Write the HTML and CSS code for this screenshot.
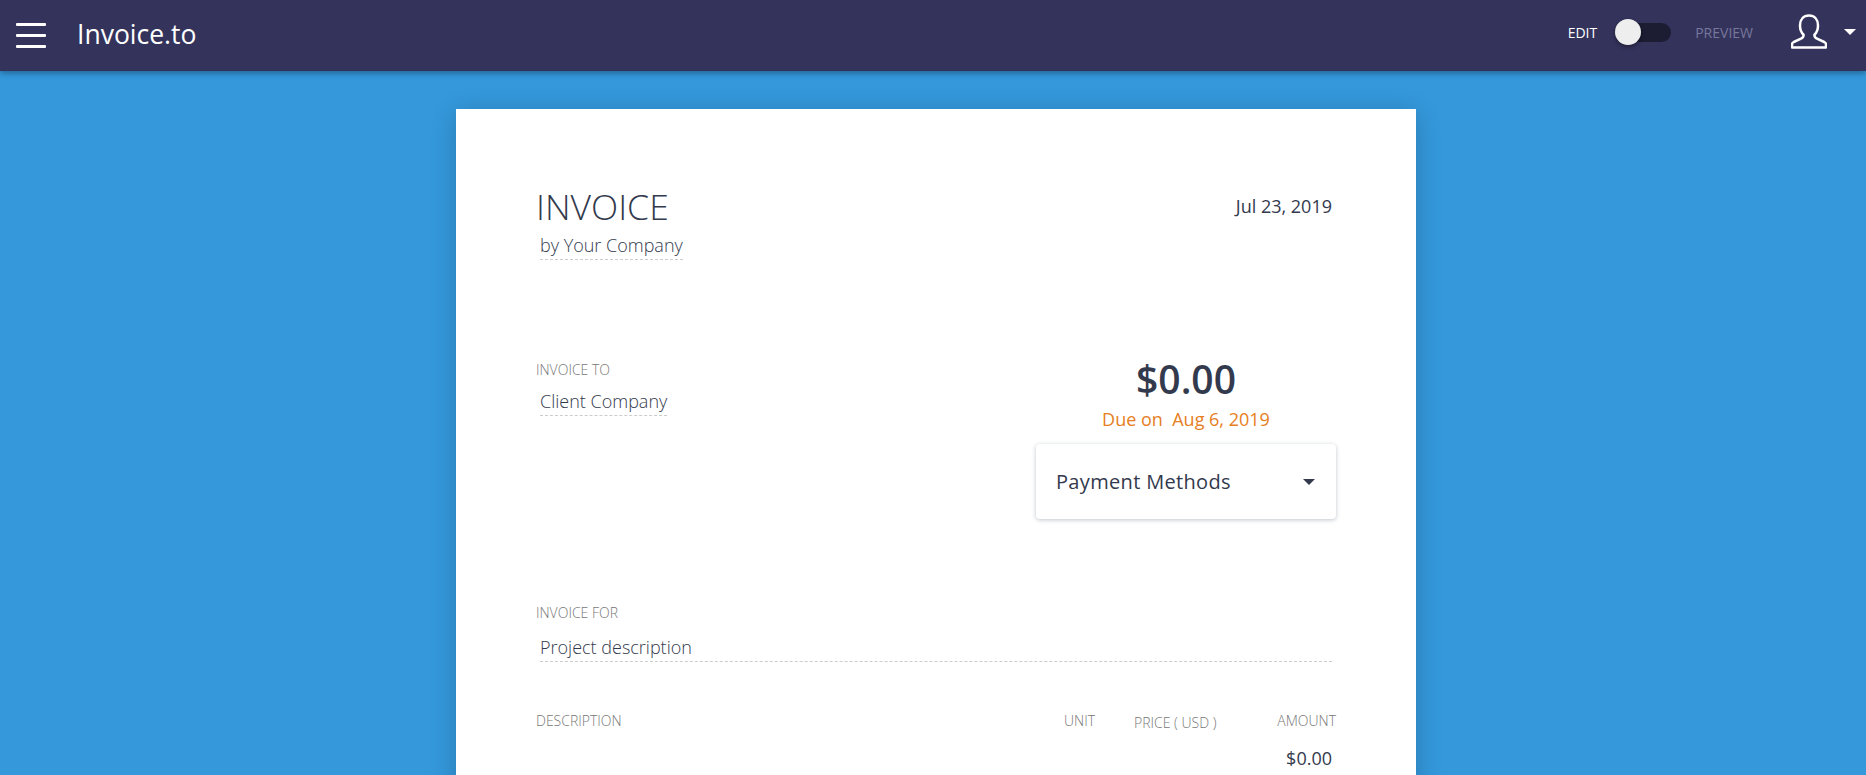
FILE: index.html
```html
<!DOCTYPE html>
<html lang="en">
<head>
    <meta charset="UTF-8">
    <meta name="viewport" content="width=device-width, initial-scale=1.0">
    <title>Invoice.to</title>
    <link rel="stylesheet" href="styles.css">
</head>
<body>
  <header class="topbar">
    <div class="menu-icon"><span></span><span></span><span></span></div>
    <div class="brand">Invoice.to</div>
    <div class="mode-label mode-edit">EDIT</div>
    <div class="switch"><span class="knob"></span></div>
    <div class="mode-label mode-preview">PREVIEW</div>
    <svg class="user-icon" width="36" height="36" viewBox="0 0 36 36" fill="none" stroke="#fff" stroke-width="2.500" stroke-linejoin="round">
      <path d="M18 1.500c-5.600 0-9 4-9 10 0 4.200 1.500 7.400 3.600 9.300 0 2-.6 3-2.600 3.900l-7.200 3.300c-1.200.6-1.800 1.400-1.800 2.500v3h34v-3c0-1.100-.6-1.900-1.800-2.500L26 24.700c-2-.9-2.600-1.900-2.600-3.900 2.100-1.900 3.600-5.100 3.600-9.300 0-6-3.400-10-9-10z"/>
    </svg>
    <span class="caret caret-white"></span>
  </header>

  <main class="sheet">
    <div class="row head-row">
      <div>
        <h1>INVOICE</h1>
        <div class="field field-inline">by Your Company</div>
      </div>
      <div class="invoice-date">Jul 23, 2019</div>
    </div>

    <div class="row bill-row">
      <div class="bill-to">
        <div class="label">INVOICE TO</div>
        <div class="field field-inline">Client Company</div>
      </div>
      <div class="summary">
        <div class="total">$0.00</div>
        <div class="due">Due on&nbsp; Aug 6, 2019</div>
        <div class="payment">
          <span>Payment Methods</span>
          <span class="caret caret-dark"></span>
        </div>
      </div>
    </div>

    <div class="invoice-for">
      <div class="label">INVOICE FOR</div>
      <div class="field">Project description</div>
    </div>

    <div class="items">
      <div class="label">DESCRIPTION</div>
      <div class="label col-unit">UNIT</div>
      <div class="label col-price">PRICE ( USD )</div>
      <div class="label col-amount">AMOUNT</div>
      <div class="item-amount">$0.00</div>
    </div>
  </main>
</body>
</html>
```

FILE: styles.css
```css
html, body {
  height: 100%;
}

body {
  margin: 0;
  overflow: hidden;
  background-color: #3498db;
  font-family: 'Open Sans', sans-serif;
  color: #333a4d;
}

.topbar {
  display: flex;
  align-items: center;
  height: 71px;
  padding-left: 16px;
  background-color: #34335c;
  box-shadow: 0 2px 6px rgba(0, 0, 0, 0.35);
  color: #fff;
}

.menu-icon {
  display: flex;
  flex-direction: column;
  gap: 8px;
  width: 30px;
}

.menu-icon span {
  height: 3px;
  background-color: #fff;
  border-radius: 1px;
}

.brand {
  margin-left: 31px;
  font-size: 26.500px;
  margin-top: -3px;
}

.mode-label {
  font-size: 14px;
  margin-top: -7px;
}

.mode-edit {
  margin-left: auto;
}

.mode-preview {
  color: #77779a;
}

.switch {
  position: relative;
  width: 55px;
  height: 19px;
  margin: -7px 24px 0 19px;
  background-color: #1c1c33;
  border-radius: 10px;
}

.knob {
  position: absolute;
  left: -1px;
  top: -3.500px;
  width: 26px;
  height: 26px;
  background-color: #eee;
  border-radius: 50%;
  box-shadow: 0 2px 4px rgba(0, 0, 0, 0.4);
}

.user-icon {
  margin: -7px 0 0 38px;
}

.caret {
  width: 0;
  height: 0;
  border-left: 6px solid transparent;
  border-right: 6px solid transparent;
}

.caret-white {
  margin: -7px 10px 0 17px;
  border-top: 6px solid #fff;
}

.caret-dark {
  border-top: 6px solid #333a4d;
}

.sheet {
  width: 960px;
  height: 900px;
  box-sizing: border-box;
  margin: 38px 0 0 456px;
  padding: 74px 84px 0 80px;
  background-color: #fff;
  box-shadow: 0 4px 24px rgba(0, 0, 0, 0.2);
}

.row {
  display: flex;
  justify-content: space-between;
}

h1 {
  margin: 0;
  font-size: 35.500px;
  font-weight: 300;
  line-height: 47px;
}

.label {
  font-size: 14px;
  font-weight: 300;
  color: #777;
  line-height: 17px;
}

.field {
  margin-left: 4px;
  padding: 3px 0 2px;
  font-size: 18px;
  font-weight: 300;
  line-height: 24px;
  border-bottom: 1px dashed #ccc;
}

.field-inline {
  width: fit-content;
}

.invoice-date {
  margin-top: 11px;
  font-size: 18px;
  line-height: 24px;
}

.bill-row {
  margin-top: 101px;
  margin-right: -4px;
}

.bill-to .label {
  margin-bottom: 8px;
}

.summary {
  width: 300px;
  margin-top: -8px;
  text-align: center;
}

.total {
  font-size: 39px;
  font-weight: 600;
  line-height: 52px;
}

.due {
  margin-top: 2px;
  font-size: 18px;
  line-height: 24px;
  color: #e67e22;
}

.payment {
  display: flex;
  align-items: center;
  justify-content: space-between;
  height: 75px;
  box-sizing: border-box;
  margin-top: 13px;
  padding: 0 21px 0 20px;
  font-size: 20px;
  letter-spacing: 0.33px;
  background-color: #fff;
  border-radius: 4px;
  box-shadow: 0 1px 4px rgba(44, 62, 80, 0.3);
}

.invoice-for {
  margin-top: 85px;
}

.invoice-for .label {
  margin-bottom: 11px;
}

.items {
  display: grid;
  grid-template-columns: 1fr 70px 142px 60px;
  margin-top: 50px;
  margin-right: -4px;
}

.col-price {
  padding-top: 2px;
}

.col-amount {
  text-align: right;
}

.item-amount {
  grid-column: 4;
  margin-top: 15px;
  margin-right: 4px;
  font-size: 18px;
  line-height: 24px;
  text-align: right;
  white-space: nowrap;
}
```
